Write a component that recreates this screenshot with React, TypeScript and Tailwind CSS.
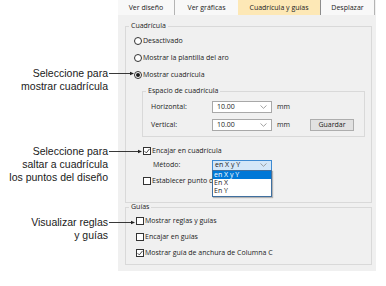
import React from "react";

function Radio({ checked }: { checked?: boolean }) {
  return (
    <span className="w-[8px] h-[8px] shrink-0 rounded-full border border-[#333] bg-white flex items-center justify-center">
      {checked && <span className="w-[4px] h-[4px] rounded-full bg-[#1a1a1a]" />}
    </span>
  );
}

function Check({ checked }: { checked?: boolean }) {
  return (
    <span className="w-[8px] h-[8px] shrink-0 border border-[#333] bg-white flex items-center justify-center">
      {checked && (
        <svg width="6" height="6" viewBox="0 0 6 6">
          <path d="M0.6 3.2 L2.3 4.9 L5.5 0.9" stroke="#333" strokeWidth="0.9" fill="none" />
        </svg>
      )}
    </span>
  );
}

function Chevron() {
  return (
    <svg width="7" height="4" viewBox="0 0 7 4">
      <path d="M0.5 0.5 L3.5 3.3 L6.5 0.5" stroke="#8a8a8a" strokeWidth="0.8" fill="none" />
    </svg>
  );
}

function Arrow({ w }: { w: number }) {
  return (
    <svg width={w} height="5" viewBox={`0 0 ${w} 5`} className="absolute left-full top-[4px] ml-[1px]">
      <line x1="0" y1="2.5" x2={w - 3} y2="2.5" stroke="#222" strokeWidth="0.9" />
      <polygon points={`${w - 4},0.8 ${w},2.5 ${w - 4},4.2`} fill="#222" />
    </svg>
  );
}

function Callout({ lines, w, className }: { lines: string[]; w: number; className: string }) {
  return (
    <div className={`relative w-[108px] text-right ${className}`}>
      {lines.map((l) => (
        <div key={l} className="whitespace-nowrap">{l}</div>
      ))}
      <Arrow w={w} />
    </div>
  );
}

function Combo({ value }: { value: string }) {
  return (
    <div className="w-[60px] h-[12px] shrink-0 bg-white border border-[#a8a8a8] flex items-center justify-between pl-[4px] pr-[4px]">
      <span>{value}</span>
      <Chevron />
    </div>
  );
}

export default function App() {
  return (
    <div className="w-[386px] h-[286px] bg-white flex">
      <div className="w-[118px] shrink-0 flex flex-col text-[10.5px] leading-[13px] text-[#1a1a1a] font-['Liberation_Sans',Arial,sans-serif]">
        <Callout className="mt-[67px]" lines={["Seleccione para", "mostrar cuadrícula"]} w={25} />
        <Callout className="mt-[52px]" lines={["Seleccione para", "saltar a cuadrícula", "los puntos del diseño"]} w={33} />
        <Callout className="mt-[32px]" lines={["Visualizar reglas", "y guías"]} w={26} />
      </div>

      <div className="w-[258px] h-[271px] shrink-0 bg-[#f0f0f0] flex flex-col text-[7px] leading-[10px] text-[#222] font-['Open_Sans','Noto_Sans',sans-serif]">
        <div className="h-[15px] flex shrink-0">
          <div className="w-[57px] flex items-center justify-center bg-[#f8f8f8] border-r border-[#b4b4b4]">Ver diseño</div>
          <div className="w-[63px] flex items-center justify-center bg-[#f8f8f8]">Ver gráficas</div>
          <div className="w-[83px] flex items-center justify-center bg-[#fde8b6] border-r border-[#8c8c8c]">Cuadrícula y guías</div>
          <div className="w-[54px] flex items-center justify-center bg-[#f8f8f8] border-r border-[#b4b4b4]">Desplazar</div>
        </div>

        <div className="pl-[7px] pr-[4px] flex flex-col">
          <fieldset className="mt-[7px] border border-[#d9d9d9]">
            <legend className="ml-[3px] px-[2px] leading-[8px]">Cuadrícula</legend>
            <div className="pt-[2px] flex flex-col">
              <div className="h-[17px] pl-[8px] flex items-center gap-[1px]"><Radio />Desactivado</div>
              <div className="h-[17px] pl-[8px] flex items-center gap-[1px]"><Radio />Mostrar la plantilla del aro</div>
              <div className="h-[17px] pl-[8px] flex items-center gap-[1px]"><Radio checked />Mostrar cuadrícula</div>
            </div>
            <fieldset className="mt-[4px] ml-[16px] mr-[6px] border border-[#d9d9d9]">
              <legend className="ml-[3px] px-[2px] leading-[8px]">Espacio de cuadrícula</legend>
              <div className="pl-[8px] pb-[4px] flex flex-col">
                <div className="mt-[5px] h-[14px] flex items-center">
                  <span className="w-[61px]">Horizontal:</span>
                  <Combo value="10.00" />
                  <span className="ml-[5px]">mm</span>
                </div>
                <div className="mt-[4px] h-[14px] flex items-center">
                  <span className="w-[61px]">Vertical:</span>
                  <Combo value="10.00" />
                  <span className="ml-[5px] w-[33px]">mm</span>
                  <div className="w-[44px] h-[12px] bg-[#e1e1e1] border border-[#adadad] flex items-center justify-center">Guardar</div>
                </div>
              </div>
            </fieldset>
            <div className="mt-[7px] h-[14px] pl-[17px] flex items-center gap-[1px]"><Check checked />Encajar en cuadrícula</div>
            <div className="h-[14px] pl-[27px] flex items-center">
              <span className="w-[59px]">Método:</span>
              <div className="relative w-[60px] h-[11px] bg-[#d4e7f8] border border-[#3d8ad2] flex items-center justify-between pl-[2px] pr-[4px]">
                <span>en X y Y</span>
                <Chevron />
                <div className="absolute left-[-1px] top-full w-[60px] h-[27px] bg-white border border-[#3f6f9f] shadow-[1px_1px_1px_rgba(0,0,0,0.25)] z-10 flex flex-col leading-[8px]">
                  <div className="bg-[#0078d7] text-white pl-[1px] h-[8px]">en X y Y</div>
                  <div className="pl-[1px] h-[8px]">En X</div>
                  <div className="pl-[1px] h-[8px]">En Y</div>
                </div>
              </div>
            </div>
            <div className="mt-[2px] h-[14px] pl-[17px] pb-[0px] flex items-center gap-[1px] overflow-hidden whitespace-nowrap"><Check />Establecer punto de origen</div>
            <div className="h-[14px]" />
          </fieldset>

          <fieldset className="border border-[#d9d9d9]">
            <legend className="ml-[3px] px-[2px] leading-[8px]">Guías</legend>
            <div className="pt-[2px] pb-[3px] flex flex-col">
              <div className="h-[16px] pl-[10px] flex items-center gap-[1px]"><Check />Mostrar reglas y guías</div>
              <div className="h-[16px] pl-[10px] flex items-center gap-[1px]"><Check />Encajar en guías</div>
              <div className="h-[16px] pl-[10px] flex items-center gap-[1px]"><Check checked />Mostrar guía de anchura de Columna C</div>
            </div>
          </fieldset>
        </div>
      </div>
    </div>
  );
}
